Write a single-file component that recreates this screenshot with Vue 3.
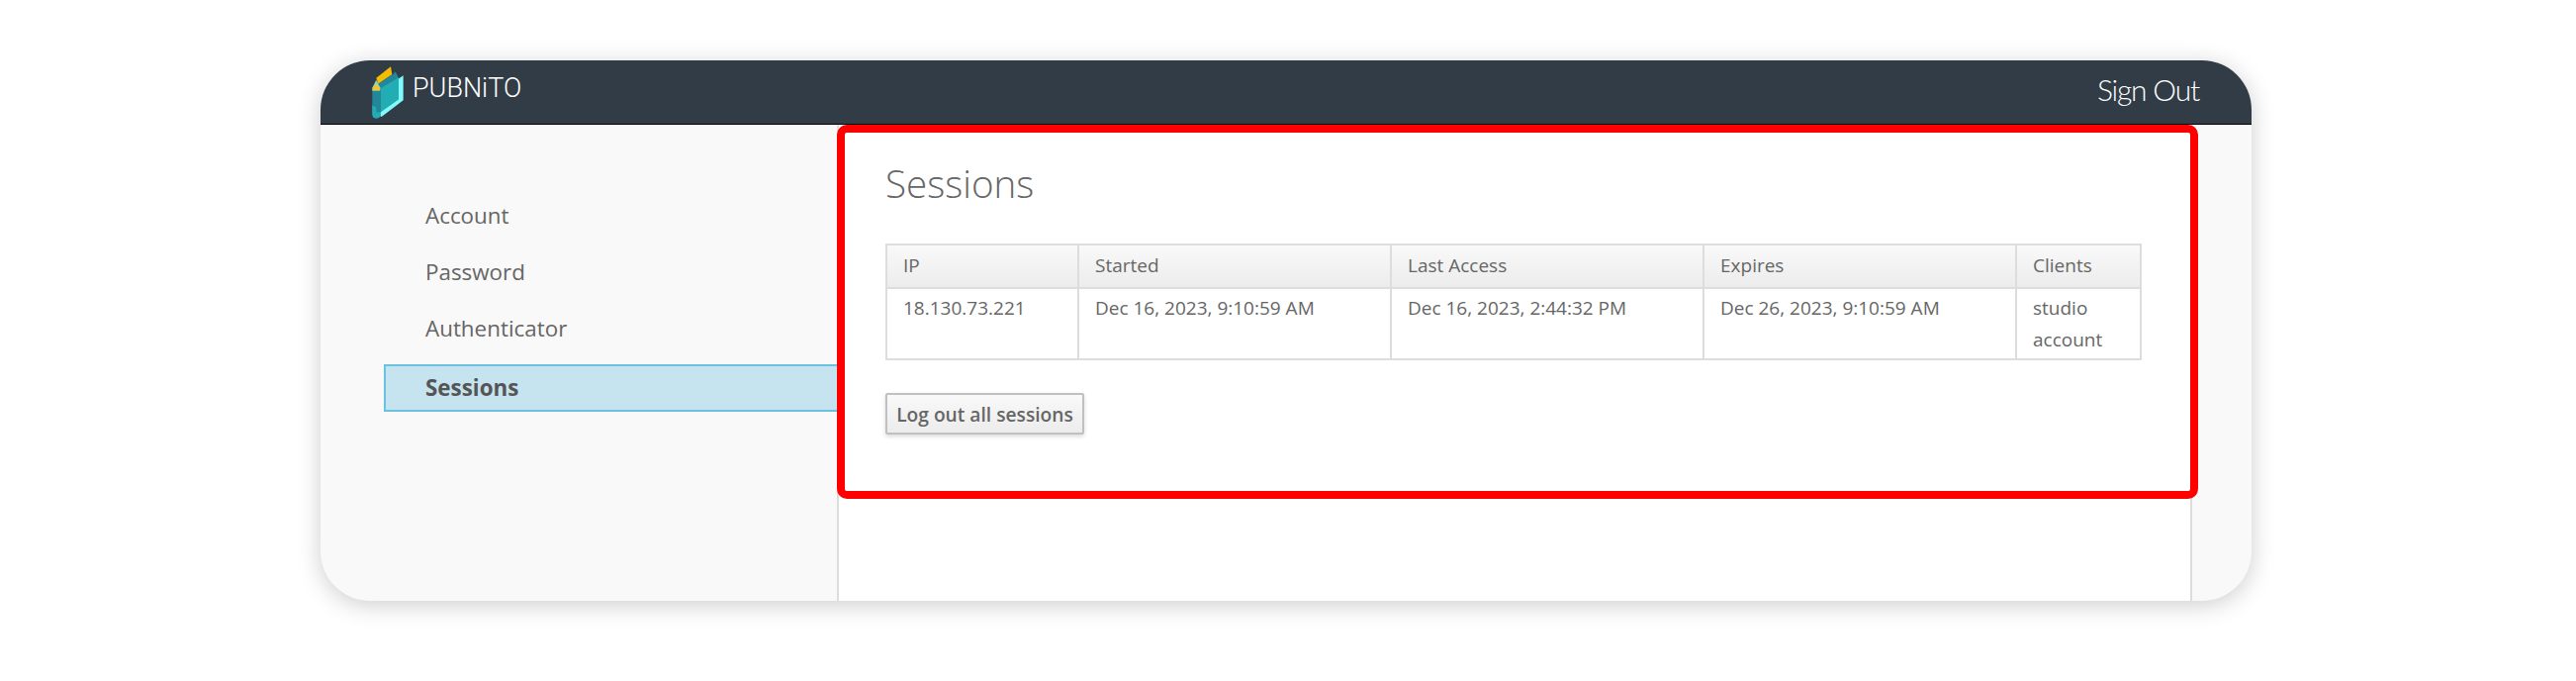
<template>
  <div class="page">
    <div class="window">
      <header class="topbar">
        <div class="brand">
          <svg class="logo" viewBox="47 33 96 158" width="32" height="53">
            <path d="M60 68 L104 33 L108 57 L66 86 Z" fill="#f2bd00" />
            <path d="M68 84 L112 56 L118 48 L128 68 L72 102 Z" fill="#23879b" />
            <path d="M72 100 L128 66 L128 132 L72 172 Z" fill="#22adb5" />
            <path d="M128 70 L142 60 L142 135 L78 184 Q72 188 72 180 L72 172 L128 132 Z" fill="#7ffbfb" />
            <path d="M48 104 L72 104 L72 180 Q72 190 60 190 Q48 190 48 178 Z" fill="#23879b" />
            <path d="M60 172 L72 172 L72 185 Q66 191 58 190 Q48 188 48 176 L48 150 L60 158 Z" fill="#22adb5" />
            <path d="M48 98 L60 74 L72 96 L72 106 L48 106 Z" fill="#7fd6cc" />
            <path d="M49 98 L60 85 L71 98 L71 106 L49 106 Z" fill="#f4c430" />
          </svg>
          <span class="brand-name">PUBNiTO</span>
        </div>
        <a class="signout">Sign Out</a>
      </header>

      <div class="content">
        <nav class="sidebar">
          <a
            v-for="item in navItems"
            :key="item"
            class="nav-item"
            :class="{ active: item === 'Sessions' }"
          >{{ item }}</a>
        </nav>

        <main class="main">
          <h1 class="title">Sessions</h1>
          <table class="sessions">
            <thead>
              <tr>
                <th class="col-ip">IP</th>
                <th class="col-date">Started</th>
                <th class="col-date">Last Access</th>
                <th class="col-date">Expires</th>
                <th>Clients</th>
              </tr>
            </thead>
            <tbody>
              <tr v-for="row in sessions" :key="row.ip">
                <td>{{ row.ip }}</td>
                <td>{{ row.started }}</td>
                <td>{{ row.lastAccess }}</td>
                <td>{{ row.expires }}</td>
                <td>
                  <div v-for="client in row.clients" :key="client">{{ client }}</div>
                </td>
              </tr>
            </tbody>
          </table>
          <button class="logout">Log out all sessions</button>
          <div class="highlight"></div>
        </main>

        <div class="gutter"></div>
      </div>
    </div>
  </div>
</template>

<script setup>
const navItems = ['Account', 'Password', 'Authenticator', 'Sessions']

const sessions = [
  {
    ip: '18.130.73.221',
    started: 'Dec 16, 2023, 9:10:59 AM',
    lastAccess: 'Dec 16, 2023, 2:44:32 PM',
    expires: 'Dec 26, 2023, 9:10:59 AM',
    clients: ['studio', 'account']
  }
]
</script>

<style>
html,
body {
  margin: 0;
  background: #fff;
}
</style>

<style scoped>
.page {
  height: 688px;
  box-sizing: border-box;
  padding: 61px 0 0 324px;
  overflow: hidden;
}

.window {
  width: 1952px;
  height: 546px;
  border-radius: 50px;
  background: #f9f9f9;
  box-shadow: 0 4px 24px rgba(0, 0, 0, 0.2);
  overflow: hidden;
  display: flex;
  flex-direction: column;
  font-family: "Open Sans", sans-serif;
  color: #666;
}

.topbar {
  height: 65px;
  flex: none;
  box-sizing: border-box;
  background: #323c46;
  border-bottom: 1px solid #000;
  display: flex;
  align-items: center;
  justify-content: space-between;
  padding: 0 53px 0 52px;
}

.brand {
  display: flex;
  align-items: center;
  gap: 9px;
}

.logo {
  display: block;
}

.brand-name {
  font-family: Roboto, sans-serif;
  font-weight: 300;
  font-size: 27px;
  color: #fff;
  margin-bottom: 9px;
}

.signout {
  font-family: Lato, sans-serif;
  font-weight: 300;
  font-size: 30px;
  letter-spacing: -1.2px;
  color: #fff;
  margin-bottom: 6px;
}

.content {
  flex: 1;
  display: flex;
  min-height: 0;
}

.sidebar {
  width: 522px;
  flex: none;
  box-sizing: border-box;
  padding: 63px 0 0 64px;
  display: flex;
  flex-direction: column;
}

.nav-item {
  height: 57px;
  box-sizing: border-box;
  padding-left: 42px;
  display: flex;
  align-items: center;
  font-size: 22.4px;
  color: #666;
}

.nav-item.active {
  height: 48px;
  margin-top: 8px;
  border: 2px solid #6cc1e3;
  border-right: none;
  padding: 0 0 2px 40px;
  background: #c5e4f0;
  font-weight: 700;
  color: #555;
}

.main {
  position: relative;
  flex: 1;
  min-width: 0;
  box-sizing: border-box;
  background: #fff;
  border-left: 2px solid #ddd;
  border-right: 2px solid #ddd;
  padding: 35px 48px 0 47px;
}

.title {
  margin: 0;
  font-weight: 300;
  font-size: 38.6px;
  line-height: 48px;
  color: #666;
}

.sessions {
  margin-top: 37px;
  width: 1270px;
  table-layout: fixed;
  border-collapse: collapse;
  font-size: 19px;
  color: #666;
}

.sessions th,
.sessions td {
  box-sizing: border-box;
  border: 2px solid #ddd;
  padding: 0 16px;
  text-align: left;
  font-weight: 400;
  line-height: 32px;
}

.sessions th {
  height: 44px;
  padding-bottom: 2px;
  background: linear-gradient(#f9f9f9, #ececec);
}

.sessions td {
  height: 72px;
  vertical-align: top;
  padding-top: 3px;
  padding-bottom: 2px;
}

.col-ip {
  width: 194px;
}

.col-date {
  width: 316px;
}

.logout {
  display: block;
  margin-top: 33px;
  width: 201px;
  height: 42px;
  padding: 0;
  box-sizing: border-box;
  border: 2px solid #c0c0c0;
  border-radius: 2px;
  background: linear-gradient(#f9f9f9, #ececec);
  box-shadow: 0 2px 4px rgba(0, 0, 0, 0.15);
  font-family: "Open Sans", sans-serif;
  font-weight: 600;
  font-size: 19.2px;
  color: #666;
}

.highlight {
  position: absolute;
  top: 0;
  left: -2px;
  width: 1376px;
  height: 378px;
  box-sizing: border-box;
  border: 8px solid #f00;
  border-radius: 10px;
}

.gutter {
  width: 60px;
  flex: none;
}
</style>
